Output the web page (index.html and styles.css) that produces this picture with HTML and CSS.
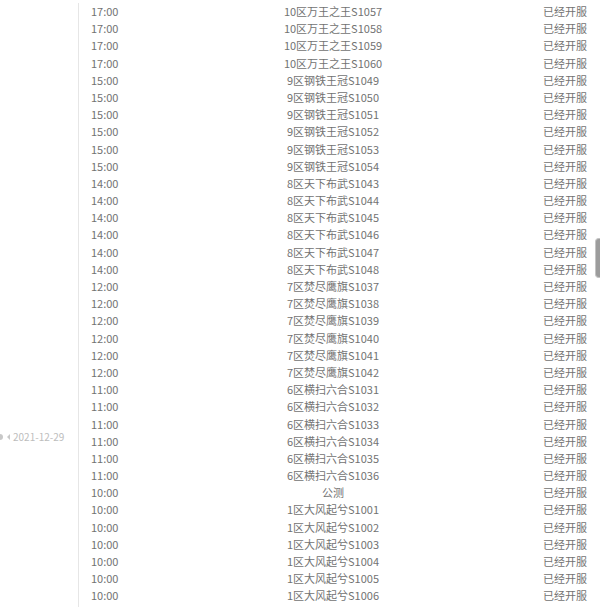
FILE: index.html
```html
<!DOCTYPE html>
<html lang="zh-CN">
<head>
    <meta charset="utf-8" />
    <link rel="stylesheet" href="styles.css">
    <title>开服表</title>
</head>
<body>
    <div class="timeline">
        <div class="side">
            <div class="date">
                <svg class="mark" width="12" height="8" viewBox="0 0 12 8">
                    <circle cx="1" cy="4" r="3" fill="#c8c8c8"/>
                    <polygon points="11,1 8,4 11,7" fill="#c8c8c8"/>
                </svg>
                <span>2021-12-29</span>
            </div>
        </div>
        <div class="list">
            <div class="row"><span class="time">17:00</span><span class="name">10区万王之王S1057</span><span class="state">已经开服</span></div>
            <div class="row"><span class="time">17:00</span><span class="name">10区万王之王S1058</span><span class="state">已经开服</span></div>
            <div class="row"><span class="time">17:00</span><span class="name">10区万王之王S1059</span><span class="state">已经开服</span></div>
            <div class="row"><span class="time">17:00</span><span class="name">10区万王之王S1060</span><span class="state">已经开服</span></div>
            <div class="row"><span class="time">15:00</span><span class="name">9区钢铁王冠S1049</span><span class="state">已经开服</span></div>
            <div class="row"><span class="time">15:00</span><span class="name">9区钢铁王冠S1050</span><span class="state">已经开服</span></div>
            <div class="row"><span class="time">15:00</span><span class="name">9区钢铁王冠S1051</span><span class="state">已经开服</span></div>
            <div class="row"><span class="time">15:00</span><span class="name">9区钢铁王冠S1052</span><span class="state">已经开服</span></div>
            <div class="row"><span class="time">15:00</span><span class="name">9区钢铁王冠S1053</span><span class="state">已经开服</span></div>
            <div class="row"><span class="time">15:00</span><span class="name">9区钢铁王冠S1054</span><span class="state">已经开服</span></div>
            <div class="row"><span class="time">14:00</span><span class="name">8区天下布武S1043</span><span class="state">已经开服</span></div>
            <div class="row"><span class="time">14:00</span><span class="name">8区天下布武S1044</span><span class="state">已经开服</span></div>
            <div class="row"><span class="time">14:00</span><span class="name">8区天下布武S1045</span><span class="state">已经开服</span></div>
            <div class="row"><span class="time">14:00</span><span class="name">8区天下布武S1046</span><span class="state">已经开服</span></div>
            <div class="row"><span class="time">14:00</span><span class="name">8区天下布武S1047</span><span class="state">已经开服</span></div>
            <div class="row"><span class="time">14:00</span><span class="name">8区天下布武S1048</span><span class="state">已经开服</span></div>
            <div class="row"><span class="time">12:00</span><span class="name">7区焚尽鹰旗S1037</span><span class="state">已经开服</span></div>
            <div class="row"><span class="time">12:00</span><span class="name">7区焚尽鹰旗S1038</span><span class="state">已经开服</span></div>
            <div class="row"><span class="time">12:00</span><span class="name">7区焚尽鹰旗S1039</span><span class="state">已经开服</span></div>
            <div class="row"><span class="time">12:00</span><span class="name">7区焚尽鹰旗S1040</span><span class="state">已经开服</span></div>
            <div class="row"><span class="time">12:00</span><span class="name">7区焚尽鹰旗S1041</span><span class="state">已经开服</span></div>
            <div class="row"><span class="time">12:00</span><span class="name">7区焚尽鹰旗S1042</span><span class="state">已经开服</span></div>
            <div class="row"><span class="time">11:00</span><span class="name">6区横扫六合S1031</span><span class="state">已经开服</span></div>
            <div class="row"><span class="time">11:00</span><span class="name">6区横扫六合S1032</span><span class="state">已经开服</span></div>
            <div class="row"><span class="time">11:00</span><span class="name">6区横扫六合S1033</span><span class="state">已经开服</span></div>
            <div class="row"><span class="time">11:00</span><span class="name">6区横扫六合S1034</span><span class="state">已经开服</span></div>
            <div class="row"><span class="time">11:00</span><span class="name">6区横扫六合S1035</span><span class="state">已经开服</span></div>
            <div class="row"><span class="time">11:00</span><span class="name">6区横扫六合S1036</span><span class="state">已经开服</span></div>
            <div class="row"><span class="time">10:00</span><span class="name">公测</span><span class="state">已经开服</span></div>
            <div class="row"><span class="time">10:00</span><span class="name">1区大风起兮S1001</span><span class="state">已经开服</span></div>
            <div class="row"><span class="time">10:00</span><span class="name">1区大风起兮S1002</span><span class="state">已经开服</span></div>
            <div class="row"><span class="time">10:00</span><span class="name">1区大风起兮S1003</span><span class="state">已经开服</span></div>
            <div class="row"><span class="time">10:00</span><span class="name">1区大风起兮S1004</span><span class="state">已经开服</span></div>
            <div class="row"><span class="time">10:00</span><span class="name">1区大风起兮S1005</span><span class="state">已经开服</span></div>
            <div class="row"><span class="time">10:00</span><span class="name">1区大风起兮S1006</span><span class="state">已经开服</span></div>
        </div>
    </div>
    <div class="scroll-thumb"></div>
</body>
</html>
```

FILE: styles.css
```css
body {
    margin: 0;
    background-color: #ffffff;
    font-family: "Noto Sans CJK SC", "Microsoft YaHei", sans-serif;
    font-size: 11px;
    color: #727272;
    overflow: hidden;
}

.timeline {
    display: flex;
    height: 607px;
}

.side {
    width: 78px;
    flex-shrink: 0;
}

.date {
    display: flex;
    align-items: center;
    gap: 2px;
    margin-top: 428px;
    margin-left: -1px;
    color: #bdbdbd;
    font-size: 10px;
    line-height: 17px;
}

.mark {
    display: block;
}

.list {
    flex: 1;
    border-left: 1px solid #e6e6e6;
    margin-top: 3px;
}

.row {
    display: grid;
    grid-template-columns: 130px 1fr 143px;
    height: 17.2px;
    line-height: 17.2px;
    white-space: nowrap;
}

.time {
    padding-left: 12px;
}

.name {
    text-align: center;
}

.state {
    text-align: right;
    padding-right: 13px;
}

.scroll-thumb {
    position: absolute;
    top: 238px;
    right: 0;
    width: 4px;
    height: 38px;
    background-color: #9c9c9c;
    border: 1px solid #c4c4c4;
    border-right: none;
    border-radius: 4px 0 0 4px;
}
```
